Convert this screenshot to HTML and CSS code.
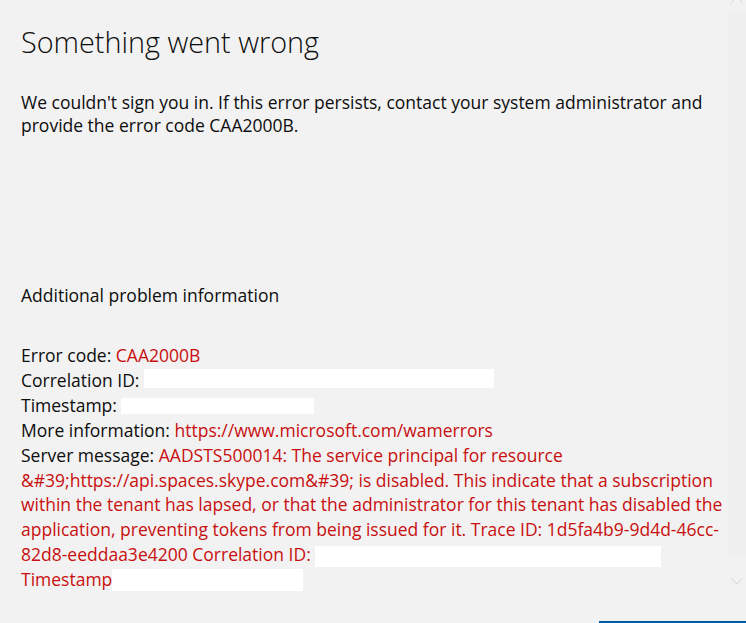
FILE: index.html
```html
<!DOCTYPE html>
<html lang="en">
<head>
<meta charset="utf-8">
<title>Something went wrong</title>
<link rel="stylesheet" href="styles.css">
</head>
<body>
<main class="page">
  <h1 class="title">Something went wrong</h1>
  <p class="intro">We couldn't sign you in. If this error persists, contact your system administrator and<br>provide the error code CAA2000B.</p>

  <h2 class="subhead">Additional problem information</h2>

  <div class="details">
    <div class="row">Error code: <span class="err">CAA2000B</span></div>
    <div class="row">Correlation ID: <span class="redact r1"></span></div>
    <div class="row">Timestamp: <span class="redact r2"></span></div>
    <div class="row">More information: <span class="err">https://www.microsoft.com/wamerrors</span></div>
    <div class="row">Server message: <span class="err">AADSTS500014: The service principal for resource<br>&amp;#39;https://api.spaces.skype.com&amp;#39; is disabled. This indicate that a subscription<br>within the tenant has lapsed, or that the administrator for this tenant has disabled the<br>application, preventing tokens from being issued for it. Trace ID: 1d5fa4b9-9d4d-46cc-<br>82d8-eeddaa3e4200 Correlation ID: <span class="redact r3"></span><br>Timestamp<span class="redact r4"></span></span></div>
  </div>
</main>

<div class="scrollbar">
  <svg class="chev up" width="14" height="8" viewBox="0 0 14 8"><path d="M1 7 L7 1 L13 7" fill="none" stroke="#d6d6d6" stroke-width="1"/></svg>
  <div class="track"></div>
  <svg class="chev down" width="14" height="8" viewBox="0 0 14 8"><path d="M1 1 L7 7 L13 1" fill="none" stroke="#d3d3d3" stroke-width="1"/></svg>
</div>

<div class="button-edge"></div>
</body>
</html>
```
FILE: styles.css
```css
html, body {
  margin: 0;
  padding: 0;
  background: #f2f2f2;
  overflow: hidden;
}

body {
  width: 746px;
  height: 623px;
  position: relative;
  font-family: "Open Sans", "Noto Sans", "Liberation Sans", sans-serif;
  color: #0d0d0d;
}

.page {
  padding: 25px 0 0 21px;
}

.title {
  margin: 0;
  font-size: 28.8px;
  line-height: 34px;
  font-weight: 300;
  color: #0d0d0d;
}

.intro {
  margin: 32px 0 0 0;
  font-size: 17.5px;
  line-height: 23px;
}

.subhead {
  margin: 146px 0 0 0;
  font-size: 17.5px;
  line-height: 25px;
  font-weight: 400;
}

.details {
  margin-top: 35px;
  font-size: 17.5px;
  line-height: 24.9px;
}

.row {
  white-space: nowrap;
}

.err {
  color: #c80f0f;
}

.redact {
  display: inline-block;
  background: #ffffff;
}

.r1 { width: 350px; height: 19px; vertical-align: -1.3px; }
.r2 { width: 193px; height: 16px; vertical-align: -2.3px; }
.r3 { width: 346px; height: 21px; vertical-align: -5.3px; }
.r4 { width: 191px; height: 22px; vertical-align: -5.3px; }

.scrollbar {
  position: absolute;
  top: 0;
  right: 0;
  width: 18px;
  height: 590px;
  display: flex;
  flex-direction: column;
  align-items: center;
}

.chev.up {
  margin-top: -4px;
}

.track {
  width: 18px;
  height: 546px;
  margin-top: 7px;
  background: #efefef;
}

.chev.down {
  margin-top: 20px;
}

.button-edge {
  position: absolute;
  left: 599px;
  right: 0;
  bottom: 0;
  height: 2px;
  background: #005a9e;
}
```
